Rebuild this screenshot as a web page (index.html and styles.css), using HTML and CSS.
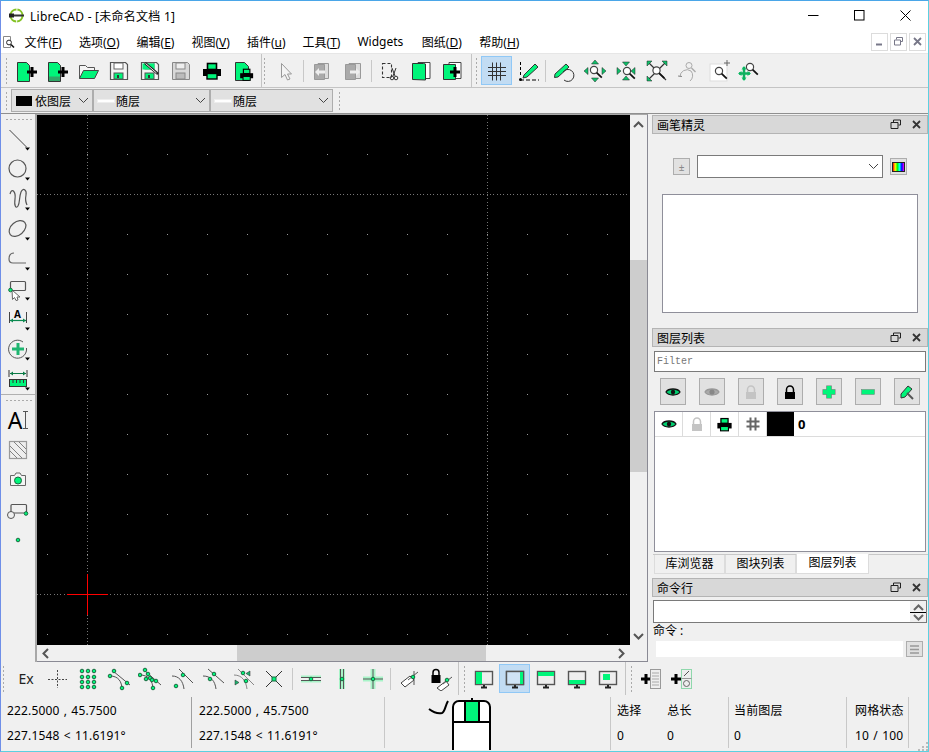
FILE: index.html
```html
<!DOCTYPE html>
<html lang="zh">
<head>
    <meta charset="UTF-8">
    <title>LibreCAD</title>
    <link rel="stylesheet" href="styles.css">
</head>
<body>
<svg class="defs" width="0" height="0">
    <defs>
        <g id="plus"><path d="M5 0v10M0 5h10" stroke="#000" stroke-width="3" fill="none"/></g>
        <g id="lens"><circle r="3.6" fill="#fff" stroke="#444" stroke-width="1.2"/><path d="M2.6 2.6l5.2 5" stroke="#111" stroke-width="1.8"/></g>
        <g id="tri"><path d="M19 20.5h5l-2.5 3z" fill="#000"/></g>
        <g id="dot"><circle r="1.8" fill="#00f57a" stroke="#1a6a40" stroke-width="1"/></g>
        <g id="floppy"><path d="M3.500 3.500h15l2 2v15h-17z" fill="#f4f4f4" stroke="#555" stroke-width="1.200"/><rect x="7" y="4" width="9" height="6" fill="#fff" stroke="#666"/><rect x="7" y="14" width="9" height="6" fill="#00f57a" stroke="#555"/><rect x="10" y="16" width="2" height="3" fill="#333"/></g>
        <g id="monitor"><rect x="3.500" y="4.500" width="17" height="13" fill="#eee" stroke="#555" stroke-width="1.400"/><path d="M9 20.500h6" stroke="#222" stroke-width="2"/><path d="M12 18v2" stroke="#222" stroke-width="2"/></g>
        <g id="eye"><path d="M5 12c2.500-4 11.500-4 14 0-2.500 4-11.500 4-14 0z" fill="#00d070" stroke="#111" stroke-width="1.300"/><circle cx="12" cy="12" r="2.200" fill="#111"/></g>
        <g id="eye-off"><path d="M5 12c2.500-4 11.500-4 14 0-2.500 4-11.500 4-14 0z" fill="#aaa" stroke="#999" stroke-width="1.300"/><circle cx="12" cy="12" r="2.600" fill="#888"/></g>
        <g id="lock"><path d="M8.500 12V9.500a3.500 3.500 0 0 1 7 0V12" fill="none" stroke="currentColor" stroke-width="1.500"/><rect x="7" y="12" width="10" height="7" fill="currentColor"/></g>
        <g id="print"><rect x="7.500" y="4.500" width="9" height="6" fill="#00f57a" stroke="#000" stroke-width="1.600"/><rect x="3" y="10" width="18" height="7" fill="#000"/><rect x="7" y="14.500" width="10" height="5.500" fill="#00f57a" stroke="#000" stroke-width="1.400"/></g>
    </defs>
</svg>

<div class="window">
    <div class="titlebar">
        <svg class="app-icon" width="17" height="17" viewBox="0 0 17 17"><circle cx="8.500" cy="8.500" r="6" fill="none" stroke="#84c225" stroke-width="2" stroke-dasharray="8.500 1"/><rect x="1" y="7.500" width="15" height="2" fill="#333"/><rect x="1" y="6.500" width="5" height="4" fill="#222"/></svg>
        <span class="title-text">LibreCAD - [未命名文档 1]</span>
        <div class="win-btns">
            <span class="win-btn"><svg width="11" height="11" viewBox="0 0 11 11"><path d="M0 5.500h10.500" stroke="#000"/></svg></span>
            <span class="win-btn"><svg width="11" height="11" viewBox="0 0 11 11"><rect x="0.500" y="0.500" width="9.500" height="9.500" fill="none" stroke="#000"/></svg></span>
            <span class="win-btn"><svg width="11" height="11" viewBox="0 0 11 11"><path d="M0.500 0.500l10 10M10.500 0.500l-10 10" stroke="#000"/></svg></span>
        </div>
    </div>

    <div class="menubar">
        <svg class="doc-icon" width="14" height="14" viewBox="0 0 14 14"><path d="M1.500 1.500h7v11h-7z" fill="#fff" stroke="#888"/><circle cx="7" cy="7.500" r="2.400" fill="#fff" stroke="#222"/><path d="M9 9.500l3 3" stroke="#111" stroke-width="1.600"/></svg>
        <span class="menu-item">文件(<u>F</u>)</span>
        <span class="menu-item">选项(<u>O</u>)</span>
        <span class="menu-item">编辑(<u>E</u>)</span>
        <span class="menu-item">视图(<u>V</u>)</span>
        <span class="menu-item">插件(<u>u</u>)</span>
        <span class="menu-item">工具(<u>T</u>)</span>
        <span class="menu-item menu-widgets">Widgets</span>
        <span class="menu-item menu-sheet">图纸(<u>D</u>)</span>
        <span class="menu-item">帮助(<u>H</u>)</span>
        <div class="mdi-btns">
            <span class="mdi-btn"><svg width="9" height="9" viewBox="0 0 9 9"><path d="M1 7.500h6" stroke="#778" stroke-width="2"/></svg></span>
            <span class="mdi-btn"><svg width="9" height="9" viewBox="0 0 9 9"><path d="M2.500 2.500v-2h6v4h-2M.5 3h6v5h-6z" fill="none" stroke="#778"/></svg></span>
            <span class="mdi-btn"><svg width="9" height="9" viewBox="0 0 9 9"><path d="M1 1l7 7M8 1l-7 7" stroke="#778" stroke-width="1.800"/></svg></span>
        </div>
    </div>

    <div class="toolbar row-file">
        <div class="tb-group group-file">
            <span class="grip"></span>
            <span class="tb"><svg class="ic" viewBox="0 0 24 24"><path d="M3.500 3.500h9l3 3v16h-12z" fill="#00f57a" stroke="#333"/><use href="#plus" x="13" y="8"/></svg></span>
            <span class="tb"><svg class="ic" viewBox="0 0 24 24"><path d="M3.500 3.500h9l3 3v16h-12z" fill="#00f57a" stroke="#333"/><path d="M4 17.500h11v4.500H4z" fill="#2fa868"/><use href="#plus" x="13" y="8"/></svg></span>
            <span class="tb"><svg class="ic" viewBox="0 0 24 24"><path d="M3.500 19.500v-13h6l2 2h7v3" fill="#f4f4f4" stroke="#555"/><path d="M3.500 19.500l4-8h15l-4 8z" fill="#00f57a" stroke="#444"/></svg></span>
            <span class="tb"><svg class="ic" viewBox="0 0 24 24"><use href="#floppy"/></svg></span>
            <span class="tb"><svg class="ic" viewBox="0 0 24 24"><use href="#floppy"/><path d="M4.500 4.500h12v6h-12z" fill="#00f57a"/><path d="M7 4l13 11" stroke="#222" stroke-width="2.400"/><path d="M7.500 4.500l11 9.500" stroke="#eee"/></svg></span>
            <span class="tb"><svg class="ic" viewBox="0 0 24 24"><path d="M3.500 3.500h15l2 2v15h-17z" fill="#d8d8d8" stroke="#888"/><rect x="7" y="4" width="9" height="6" fill="#eee" stroke="#888"/><rect x="7" y="14" width="9" height="6" fill="#bbb" stroke="#888"/></svg></span>
            <span class="tb"><svg class="ic" viewBox="0 0 24 24"><use href="#print"/></svg></span>
            <span class="tb"><svg class="ic" viewBox="0 0 24 24"><path d="M4.500 3.500h9l4 4v14h-13z" fill="#00f57a" stroke="#333"/><g transform="translate(7 7) scale(.72)"><use href="#print"/></g></svg></span>
        </div>
        <div class="tb-group group-edit">
            <span class="grip"></span>
            <span class="tb"><svg class="ic" viewBox="0 0 24 24"><path d="M7.500 4.500l10 10.500h-4l2.500 5-2.500 1-2.500-5.500-3.500 3z" fill="#f4f4f4" stroke="#999"/></svg></span>
            <span class="tb-sep"></span>
            <span class="tb"><svg class="ic" viewBox="0 0 24 24"><path d="M8 4.500h10.500v15H8z" fill="#ddd" stroke="#999"/><path d="M4.500 5.500h10v15h-10z" fill="#aaa" stroke="#999"/><path d="M5 13l4-4v2.500h6v3H9V17z" fill="#eee"/></svg></span>
            <span class="tb"><svg class="ic" viewBox="0 0 24 24"><path d="M8 4.500h11.500v15H8z" fill="#ddd" stroke="#999"/><path d="M4.500 5.500h10v15h-10z" fill="#aaa" stroke="#999"/><path d="M19 13l-4-4v2.500H9v3h6V17z" fill="#eee"/></svg></span>
            <span class="tb-sep"></span>
            <span class="tb"><svg class="ic" viewBox="0 0 24 24"><path d="M4.500 4.500h9v14h-9z" fill="none" stroke="#333" stroke-width="1.100" stroke-dasharray="3 2"/><path d="M14 9l3 8M18 9l-3 8" stroke="#333"/><circle cx="14" cy="19" r="1.800" fill="none" stroke="#333"/><circle cx="18" cy="19" r="1.800" fill="none" stroke="#333"/></svg></span>
            <span class="tb"><svg class="ic" viewBox="0 0 24 24"><path d="M9 3.500h12v16H9z" fill="#fff" stroke="#444"/><path d="M3.500 4.500h11l2 .5v16l-13-.5z" fill="#00f57a" stroke="#333"/></svg></span>
            <span class="tb"><svg class="ic" viewBox="0 0 24 24"><path d="M9 3.500h12v16H9z" fill="#fff" stroke="#444"/><path d="M3.500 5.500h12v15h-12z" fill="#00f57a" stroke="#333"/><use href="#plus" x="10" y="8"/></svg></span>
        </div>
        <div class="tb-group group-view">
            <span class="grip"></span>
            <span class="tb active"><svg class="ic" viewBox="0 0 24 24"><path d="M3 8.500h18M3 12.500h18M3 16.500h18M7.500 3.500v18M11.500 3.500v18M15.500 3.500v18" stroke="#333" fill="none"/></svg></span>
            <span class="tb"><svg class="ic" viewBox="0 0 24 24"><path d="M4.500 3v15" stroke="#000" stroke-dasharray="3 2"/><path d="M4 21h19" stroke="#000" stroke-width="1.200" stroke-dasharray="4 2"/><circle cx="4.500" cy="20.500" r="1.500"/><path d="M8 16l11-11 3 3-11 10-4 1z" fill="#00f57a" stroke="#333"/></svg></span>
            <span class="tb-sep"></span>
            <span class="tb"><svg class="ic" viewBox="0 0 24 24"><path d="M3 15L14 5l3 3L6 18l-3.500.5z" fill="#00f57a" stroke="#333"/><path d="M11 13a6 6 0 1 1 1 8" fill="none" stroke="#333"/></svg></span>
            <span class="tb"><svg class="ic" viewBox="0 0 24 24"><g transform="translate(11 11)"><use href="#lens"/></g><path d="M12 1l3.500 4h-7zM12 23l3.500-4h-7zM1 12l4-3.500v7zM23 12l-4-3.500v7z" fill="#0fc06a" stroke="#222" stroke-width=".5"/></svg></span>
            <span class="tb"><svg class="ic" viewBox="0 0 24 24"><g transform="translate(13 12)"><use href="#lens"/></g><path d="M12 7l3.500-4h-7zM12 17l3.500 4h-7zM7 12l-4-3.500v7zM17 12l4-3.500v7z" fill="#0fc06a" stroke="#222" stroke-width=".5"/></svg></span>
            <span class="tb"><svg class="ic" viewBox="0 0 24 24"><path d="M3 3l18 18M21 3L3 21" stroke="#333" stroke-width="1.200"/><path d="M2 2h5l-5 5zM22 2h-5l5 5zM2 22h5l-5-5z" fill="#0fc06a" stroke="#222" stroke-width=".5"/><g transform="translate(11.500 11.500)"><use href="#lens"/></g></svg></span>
            <span class="tb"><svg class="ic" viewBox="0 0 24 24"><circle cx="13" cy="6.500" r="3" fill="none" stroke="#aaa"/><path d="M15.500 9l4 4" stroke="#aaa" stroke-width="1.500"/><path d="M4 18a7 7 0 0 1 11-6 7 7 0 0 1-1 10" fill="none" stroke="#aaa"/><path d="M2 17l4 .5" stroke="#888"/></svg></span>
            <span class="tb"><svg class="ic" viewBox="0 0 24 24"><rect x="3" y="5" width="17" height="17" fill="#fff" stroke="#ddd"/><g transform="translate(12 12)"><use href="#lens"/></g><path d="M20 1v6M17 4h6" stroke="#666"/></svg></span>
            <span class="tb"><svg class="ic" viewBox="0 0 24 24"><g transform="translate(12 8)"><use href="#lens"/></g><path d="M6 7l2.500 3.500h-5zM6 22l2.500-3.500h-5zM0 14.500l3.500-2.500v5zM13 14.500L9.500 12v5z" fill="#0fd070"/><path d="M6 8v13M1 14.500h11" stroke="#0fb060" stroke-width="2.500"/></svg></span>
        </div>
    </div>

    <div class="toolbar row-pen">
        <span class="grip"></span>
        <span class="combo combo-color"><span class="swatch"></span>依图层<svg class="chev" width="11" height="7" viewBox="0 0 11 7"><path d="M1 1l4.500 4.500L10 1" fill="none" stroke="#444"/></svg></span>
        <span class="combo combo-line"><span class="dash"></span>随层<svg class="chev" width="11" height="7" viewBox="0 0 11 7"><path d="M1 1l4.500 4.500L10 1" fill="none" stroke="#444"/></svg></span>
        <span class="combo combo-line"><span class="dash"></span>随层<svg class="chev" width="11" height="7" viewBox="0 0 11 7"><path d="M1 1l4.500 4.500L10 1" fill="none" stroke="#444"/></svg></span>
        <span class="grip pen-grip"></span>
    </div>

    <div class="main">
        <div class="side-tools">
            <span class="grip-h"></span>
            <span class="st"><svg class="ic" viewBox="0 0 24 24"><path d="M3.500 3l17 17" stroke="#444"/><use href="#tri"/></svg></span>
            <span class="st"><svg class="ic" viewBox="0 0 24 24"><circle cx="11.500" cy="11.500" r="8.500" fill="none" stroke="#555" stroke-width="1.200"/><use href="#tri"/></svg></span>
            <span class="st"><svg class="ic" viewBox="0 0 24 24"><path d="M4 7c2-7 6-2 5 5s1 10 3 7 1-9 3-14 6-2 5 3 0 8 1 10" fill="none" stroke="#555" stroke-width="1.200"/><use href="#tri"/></svg></span>
            <span class="st"><svg class="ic" viewBox="0 0 24 24"><ellipse cx="11.500" cy="11.500" rx="9.500" ry="6.500" transform="rotate(-40 11.500 11.500)" fill="none" stroke="#555" stroke-width="1.200"/><use href="#tri"/></svg></span>
            <span class="st"><svg class="ic" viewBox="0 0 24 24"><path d="M8 6C4 6 3 9 3 12c0 2 1 4 4 4h13" fill="none" stroke="#666" stroke-width="1.200"/><use href="#tri"/></svg></span>
            <span class="st"><svg class="ic" viewBox="0 0 24 24"><rect x="4.500" y="4.500" width="15" height="9" rx="1" fill="none" stroke="#555" stroke-width="1.200"/><path d="M6 13l8 7-3 0 1 3-2 .5-1.500-3-2 2z" fill="#fff" stroke="#666"/><use href="#dot" x="4.500" y="13"/><use href="#tri"/></svg></span>
            <span class="st st-dim"><svg class="ic" viewBox="0 0 24 24"><path d="M3.500 5v11M20.500 5v11" stroke="#444"/><path d="M4 13.500h16" stroke="#0a8a50" stroke-width="1.200"/><path d="M4 13.500l3-2v4zM20 13.500l-3-2v4z" fill="#0a8a50"/><path d="M19 20.500h5l-2.500 3z" fill="#000"/></svg><b class="dim-a">A</b></span>
            <span class="st"><svg class="ic" viewBox="0 0 24 24"><path d="M17 5a9 9 0 1 0 3.500 6" fill="none" stroke="#555"/><path d="M12 6v12M6 12h12" stroke="#1fb570" stroke-width="3"/><use href="#tri"/></svg></span>
            <span class="st"><svg class="ic" viewBox="0 0 24 24"><path d="M3 3v7M21 3v7" stroke="#333"/><path d="M4 6.500h16" stroke="#0a7a45"/><path d="M4 6.500l3-2v4zM20 6.500l-3-2v4z" fill="#0a7a45"/><rect x="3.500" y="12.500" width="17" height="7" fill="#00f57a" stroke="#333"/><path d="M7 13v3M10.500 13v3M14 13v3M17.500 13v3" stroke="#333"/><use href="#tri"/></svg></span>
            <span class="side-sep"></span>
            <span class="grip-h"></span>
            <span class="st st-text"><span class="big-a">A</span><svg width="5" height="18" viewBox="0 0 5 18"><path d="M2.500 0v18M0 .5h5M0 17.500h5" stroke="#555"/></svg></span>
            <span class="st"><svg class="ic" viewBox="0 0 24 24"><rect x="3.500" y="3.500" width="17" height="17" fill="#eee" stroke="#999" stroke-width="1.200"/><path d="M4 8l12 12M4 13l7 7M8 4l12 12M13 4l7 7" stroke="#666" stroke-width=".8"/></svg></span>
            <span class="st"><svg class="ic" viewBox="0 0 24 24"><path d="M4.500 7.500h4l1.500-2.500h4l1.500 2.500h4v10h-15z" fill="#f4f4f4" stroke="#666"/><circle cx="12" cy="12.500" r="3.500" fill="#00f57a" stroke="#1a6a40"/></svg></span>
            <span class="st"><svg class="ic" viewBox="0 0 24 24"><path d="M5 14V7.500a1 1 0 0 1 1-1h13.500a1 1 0 0 1 1 1V15M8 15h10" fill="none" stroke="#555" stroke-width="1.200"/><circle cx="5" cy="17" r="3.500" fill="none" stroke="#555"/><use href="#dot" x="20" y="15.500"/></svg></span>
            <span class="st"><svg class="ic" viewBox="0 0 24 24"><use href="#dot" x="12" y="12"/></svg></span>
        </div>

        <div class="view">
            <div class="canvas">
                <svg class="grid-svg" width="593" height="530">
                    <defs>
                        <pattern id="dots" width="40" height="40" patternUnits="userSpaceOnUse"><rect x="10" y="39" width="1" height="1" fill="#9a9a9a"/></pattern>
                    </defs>
                    <rect width="593" height="530" fill="url(#dots)"/>
                    <g stroke="#777" stroke-dasharray="1 2.330" shape-rendering="crispEdges">
                        <path d="M50.500 0v530M450.500 0v530M0 79.500h593M0 479.500h593"/>
                    </g>
                </svg>
                <span class="cross-h"></span>
                <span class="cross-v"></span>
            </div>
            <div class="vscroll">
                <svg width="11" height="7" viewBox="0 0 11 7"><path d="M1 6l4.500-4.500L10 6" fill="none" stroke="#555" stroke-width="2"/></svg>
                <span class="v-track"><span class="v-thumb"></span></span>
                <svg width="11" height="7" viewBox="0 0 11 7"><path d="M1 1l4.500 4.500L10 1" fill="none" stroke="#555" stroke-width="2"/></svg>
            </div>
            <div class="hscroll">
                <svg width="7" height="11" viewBox="0 0 7 11"><path d="M6 1L1.500 5.500 6 10" fill="none" stroke="#555" stroke-width="2"/></svg>
                <span class="h-track"><span class="h-thumb"></span></span>
                <svg width="7" height="11" viewBox="0 0 7 11"><path d="M1 1l4.500 4.500L1 10" fill="none" stroke="#555" stroke-width="2"/></svg>
            </div>
            <div class="corner"></div>
        </div>

        <div class="dock">
            <div class="dock-title title-pen"><span>画笔精灵</span><svg class="dock-ctl" width="32" height="11" viewBox="0 0 32 11"><path d="M3.500 3V1h7v5h-2M1 3.500h7v6H1z" fill="none" stroke="#222"/><path d="M23 2l7 7M30 2l-7 7" stroke="#333" stroke-width="1.800"/></svg></div>
            <div class="pen-row">
                <span class="small-btn"><span class="pm">±</span></span>
                <span class="pen-combo"><svg class="chev" width="11" height="7" viewBox="0 0 11 7"><path d="M1 1l4.500 4.500L10 1" fill="none" stroke="#444"/></svg></span>
                <span class="small-btn"><span class="rainbow"></span></span>
            </div>
            <div class="pen-box"></div>

            <div class="dock-title title-layer"><span>图层列表</span><svg class="dock-ctl" width="32" height="11" viewBox="0 0 32 11"><path d="M3.500 3V1h7v5h-2M1 3.500h7v6H1z" fill="none" stroke="#222"/><path d="M23 2l7 7M30 2l-7 7" stroke="#333" stroke-width="1.800"/></svg></div>
            <div class="filter">Filter</div>
            <div class="layer-btns">
                <span class="lb"><svg class="ic" viewBox="0 0 24 24"><use href="#eye"/></svg></span>
                <span class="lb"><svg class="ic" viewBox="0 0 24 24"><use href="#eye-off"/></svg></span>
                <span class="lb muted"><svg class="ic" viewBox="0 0 24 24"><use href="#lock"/></svg></span>
                <span class="lb"><svg class="ic" viewBox="0 0 24 24"><use href="#lock"/></svg></span>
                <span class="lb"><svg class="ic" viewBox="0 0 24 24"><path d="M12 5.500v13M5.500 12h13" stroke="#777" stroke-width="5.500"/><path d="M12 6v12M6 12h12" stroke="#00f57a" stroke-width="4.500"/></svg></span>
                <span class="lb"><svg class="ic" viewBox="0 0 24 24"><rect x="5.500" y="9.500" width="13" height="5" fill="#00f57a" stroke="#777" stroke-width=".5"/></svg></span>
                <span class="lb"><svg class="ic" viewBox="0 0 24 24"><path d="M6 14l7-8 4 3-7 8-4 1z" fill="#00f57a" stroke="#333"/><path d="M12 13l6 6" stroke="#555" stroke-width="2"/></svg></span>
            </div>
            <div class="layer-list">
                <div class="layer-row">
                    <span class="lc"><svg class="ic" viewBox="0 0 24 24"><use href="#eye"/></svg></span>
                    <span class="lc muted"><svg class="ic" viewBox="0 0 24 24"><use href="#lock"/></svg></span>
                    <span class="lc"><svg class="ic print-small" viewBox="0 0 24 24"><use href="#print"/></svg></span>
                    <span class="lc"><svg class="ic" viewBox="0 0 24 24"><path d="M5.500 9.500h13M5.500 14.500h13M9.500 5.500v13M14.500 5.500v13" stroke="#666" stroke-width="2" fill="none"/></svg></span>
                    <span class="layer-swatch"></span>
                    <b class="layer-name">0</b>
                </div>
            </div>
            <div class="tabs">
                <span class="tab tab-a">库浏览器</span>
                <span class="tab tab-b">图块列表</span>
                <span class="tab tab-on">图层列表</span>
            </div>

            <div class="dock-title title-cmd"><span>命令行</span><svg class="dock-ctl" width="32" height="11" viewBox="0 0 32 11"><path d="M3.500 3V1h7v5h-2M1 3.500h7v6H1z" fill="none" stroke="#222"/><path d="M23 2l7 7M30 2l-7 7" stroke="#333" stroke-width="1.800"/></svg></div>
            <div class="cmd-out">
                <span class="cmd-spin"><svg width="11" height="7" viewBox="0 0 11 7"><path d="M1 6l4.500-4.500L10 6" fill="none" stroke="#666" stroke-width="2"/></svg><i class="spin-line"></i><svg width="11" height="7" viewBox="0 0 11 7"><path d="M1 1l4.500 4.500L10 1" fill="none" stroke="#666" stroke-width="2"/></svg></span>
            </div>
            <div class="cmd-label">命令 :</div>
            <div class="cmd-in">
                <span class="cmd-field"></span>
                <span class="small-btn menu-btn"><svg width="9" height="9" viewBox="0 0 9 9"><path d="M0 1h9M0 4.500h9M0 8h9" stroke="#999" stroke-width="1.500"/></svg></span>
            </div>
        </div>
    </div>

    <div class="toolbar row-snap">
        <div class="tb-group group-snap">
            <span class="grip"></span>
            <span class="tb tb-ex">Ex</span>
            <span class="tb"><svg class="ic" viewBox="0 0 24 24"><path d="M12.500 3v18M3 12.500h19" stroke="#444" stroke-dasharray="2 1.500"/></svg></span>
            <span class="tb"><svg class="ic" viewBox="0 0 24 24"><use href="#dot" x="6" y="4"/><use href="#dot" x="12" y="4"/><use href="#dot" x="18" y="4"/><use href="#dot" x="6" y="10"/><use href="#dot" x="12" y="10"/><use href="#dot" x="18" y="10"/><use href="#dot" x="6" y="15"/><use href="#dot" x="12" y="15"/><use href="#dot" x="18" y="15"/><use href="#dot" x="6" y="20"/><use href="#dot" x="12" y="20"/><use href="#dot" x="18" y="20"/></svg></span>
            <span class="tb"><svg class="ic" viewBox="0 0 24 24"><path d="M6 4l17 14M3 9c8 0 12 5 12 14" fill="none" stroke="#555"/><use href="#dot" x="7" y="4"/><use href="#dot" x="3" y="9"/><use href="#dot" x="20" y="16"/><use href="#dot" x="15" y="21"/></svg></span>
            <span class="tb"><svg class="ic" viewBox="0 0 24 24"><path d="M6 3l17 15M2 8c8 0 13 5 13 15" fill="none" stroke="#555"/><use href="#dot" x="7" y="3"/><use href="#dot" x="2" y="8"/><use href="#dot" x="10" y="7"/><use href="#dot" x="8" y="12"/><use href="#dot" x="12" y="11"/><use href="#dot" x="14" y="13"/><use href="#dot" x="18" y="14"/><use href="#dot" x="15" y="21"/></svg></span>
            <span class="tb"><svg class="ic" viewBox="0 0 24 24"><path d="M10 2l14 14M3 9c7 0 11 5 12 13" fill="none" stroke="#555"/><use href="#dot" x="14" y="8"/><use href="#dot" x="7" y="19"/></svg></span>
            <span class="tb"><svg class="ic" viewBox="0 0 24 24"><path d="M8 2l16 14M3 9c8 0 12 5 13 13" fill="none" stroke="#555"/><use href="#dot" x="14" y="7"/><use href="#dot" x="10" y="12"/></svg></span>
            <span class="tb"><svg class="ic" viewBox="0 0 24 24"><path d="M7 2l16 16M3 8c8 0 12 6 13 14" fill="none" stroke="#888"/><use href="#dot" x="12" y="6"/><use href="#dot" x="15" y="14"/><path d="M19 4l-4 2.500 4 2.500zM4 13l4 2.500-4 2.500z" fill="#1fb570" stroke="#222" stroke-width=".5"/></svg></span>
            <span class="tb"><svg class="ic" viewBox="0 0 24 24"><path d="M4 4l16 16M20 4L4 20" stroke="#333"/><rect x="10" y="10" width="4" height="4" fill="#00f57a" stroke="#1a6a40"/></svg></span>
            <span class="tb-sep"></span>
            <span class="tb"><svg class="ic" viewBox="0 0 24 24"><path d="M2 9.500h20M2 14.500h20" stroke="#a8f4c8" stroke-width="2"/><path d="M2 10.500h20M2 13.500h20" stroke="#555"/><use href="#dot" x="12" y="12"/></svg></span>
            <span class="tb"><svg class="ic" viewBox="0 0 24 24"><path d="M12 2v20" stroke="#a8f4c8" stroke-width="6"/><path d="M10.500 2v20M13.500 2v20" stroke="#555"/><use href="#dot" x="12" y="12"/></svg></span>
            <span class="tb"><svg class="ic" viewBox="0 0 24 24"><path d="M12 2v20M2 12h20" stroke="#a8f4c8" stroke-width="5"/><path d="M12 2v20M2 12h20" stroke="#555"/><use href="#dot" x="12" y="12"/></svg></span>
            <span class="tb-sep"></span>
            <span class="tb"><svg class="ic" viewBox="0 0 24 24"><path d="M4 16l9-7 4 4-9 7z" fill="#fff" stroke="#444"/><path d="M11 13L21 5M17 4v14" stroke="#555"/><use href="#dot" x="16" y="10"/></svg></span>
            <span class="tb tb-lock"><svg class="ic" viewBox="0 0 24 24"><path d="M4 9V5.500a3 3 0 0 1 6 0V9" fill="none" stroke="#000" stroke-width="1.500"/><rect x="2.500" y="8" width="9" height="8" fill="#000"/><path d="M8 21l9-7 3 4-8 6z" fill="#fff" stroke="#444"/><path d="M14 17l9-7" stroke="#555"/><use href="#dot" x="18" y="13"/></svg></span>
        </div>
        <div class="tb-group group-dock">
            <span class="grip"></span>
            <span class="tb"><svg class="ic" viewBox="0 0 24 24"><use href="#monitor"/><rect x="4" y="5" width="6" height="12" fill="#00f57a"/></svg></span>
            <span class="tb active"><svg class="ic" viewBox="0 0 24 24"><use href="#monitor"/><rect x="4" y="5" width="16" height="12" fill="#cfe3f5"/><rect x="3.500" y="4.500" width="17" height="13" fill="none" stroke="#555" stroke-width="1.400"/><rect x="17" y="5" width="3" height="12" fill="#00f57a"/></svg></span>
            <span class="tb"><svg class="ic" viewBox="0 0 24 24"><use href="#monitor"/><rect x="4" y="5" width="16" height="4" fill="#00f57a"/></svg></span>
            <span class="tb"><svg class="ic" viewBox="0 0 24 24"><use href="#monitor"/><rect x="4" y="13" width="16" height="4" fill="#00f57a"/></svg></span>
            <span class="tb"><svg class="ic" viewBox="0 0 24 24"><use href="#monitor"/><rect x="7" y="7" width="7" height="6" fill="#00f57a"/></svg></span>
        </div>
        <div class="tb-group">
            <span class="grip"></span>
            <span class="tb"><svg class="ic" viewBox="0 0 24 24"><use href="#plus" x="2" y="7"/><rect x="11.500" y="2.500" width="10" height="19" fill="#eee" stroke="#999"/><path d="M13 6h7M13 9h7M13 12h7M13 15h7M13 18h7" stroke="#aaa"/></svg></span>
            <span class="tb"><svg class="ic" viewBox="0 0 24 24"><use href="#plus" x="1" y="7"/><rect x="11.500" y="2.500" width="10" height="19" fill="#eee" stroke="#8fd8ac"/><path d="M11.500 11.500h10" stroke="#999"/><path d="M14 9l5-5" stroke="#555"/><circle cx="16.500" cy="16.500" r="3" fill="none" stroke="#666"/></svg></span>
        </div>
    </div>

    <div class="statusbar">
        <div class="st-cell st-abs"><span>222.5000 , 45.7500</span><span>227.1548 &lt; 11.6191°</span></div>
        <div class="st-cell st-rel"><span>222.5000 , 45.7500</span><span>227.1548 &lt; 11.6191°</span></div>
        <div class="st-mouse">
            <svg width="70" height="56" viewBox="0 0 70 56"><path d="M4 12c4 3 9 5 13 4 3-1 3-7 6-12" fill="none" stroke="#000" stroke-width="2"/><path d="M28 56V10a6 6 0 0 1 6-6h25a6 6 0 0 1 6 6v46" fill="#fff" stroke="#000" stroke-width="2"/><rect x="40" y="5" width="14" height="20" fill="#00f57a"/><path d="M40 5v20M54 5v20M28 25h37M47 1v4" stroke="#000" stroke-width="2" fill="none"/></svg>
        </div>
        <div class="st-cell st-sel"><span class="sel-pair"><span>选择</span><span>总长</span></span><span class="sel-pair"><span>0</span><span>0</span></span></div>
        <div class="st-cell st-layer"><span>当前图层</span><span>0</span></div>
        <div class="st-cell st-grid"><span>网格状态</span><span>10 / 100</span></div>
        <div class="st-end">
            <svg class="size-grip" width="10" height="10" viewBox="0 0 10 10"><path d="M8 1h2v2H8zM4 5h2v2H4zM8 5h2v2H8zM0 8h2v2H0zM4 8h2v2H4zM8 8h2v2H8z" fill="#bbb"/></svg>
        </div>
    </div>
</div>
</body>
</html>
```

FILE: styles.css
```css
* {
    box-sizing: border-box;
}
html, body {
    margin: 0;
    height: 100%;
    overflow: hidden;
}
body {
    font-family: "Noto Sans", "Noto Sans CJK SC", sans-serif;
    font-size: 12px;
    color: #000;
    background-color: #f0f0f0;
}
.defs {
    position: absolute;
}
.window {
    width: 929px;
    height: 752px;
    display: flex;
    flex-direction: column;
    border-top: 1px solid #4aa6e8;
    border-left: 1px solid #6f8fe8;
    border-right: 1px solid #5cd0e0;
    border-bottom: 1px solid #5cd0e0;
    background-color: #f0f0f0;
}

/* title + menu */
.titlebar {
    height: 29px;
    flex-shrink: 0;
    display: flex;
    align-items: center;
    background-color: #fff;
    padding-left: 7px;
}
.title-text {
    margin-left: 5px;
    font-size: 12px;
    letter-spacing: .25px;
}
.win-btns {
    margin-left: auto;
    display: flex;
}
.win-btn {
    width: 46px;
    height: 29px;
    display: flex;
    align-items: center;
    justify-content: center;
}
.menubar {
    height: 24px;
    flex-shrink: 0;
    display: flex;
    align-items: center;
    background-color: #fff;
    border-bottom: 1px solid #e6e6e6;
    padding-left: 1px;
}
.menu-item {
    padding: 0 8.5px;
    white-space: nowrap;
}
.menu-widgets {
    padding-right: 10px;
}
.menu-sheet {
    padding-right: 9px;
}
.mdi-btns {
    margin-left: auto;
    display: flex;
    gap: 2px;
    padding-right: 2px;
}
.mdi-btn {
    width: 17px;
    height: 18px;
    border: 1px solid #dcdcdc;
    display: flex;
    align-items: center;
    justify-content: center;
}

/* toolbars */
.toolbar {
    display: flex;
    align-items: center;
    flex-shrink: 0;
    background-color: #f0f0f0;
}
.row-file {
    height: 34px;
    border-bottom: 1px solid #c4c4c4;
}
.tb-group {
    height: 100%;
    display: flex;
    align-items: center;
    border-right: 1px solid #c4c4c4;
}
.group-file {
    width: 261px;
}
.group-edit {
    width: 210px;
}
.group-view {
    border-right: none;
}
.grip {
    width: 3px;
    height: 27px;
    margin: 0 4px 0 4px;
    flex-shrink: 0;
    background-image: radial-gradient(circle, #aaa 1px, transparent 1px);
    background-size: 3px 4px;
}
.tb {
    width: 31px;
    height: 29px;
    flex-shrink: 0;
    display: flex;
    align-items: center;
    justify-content: center;
}
.tb.active {
    background-color: #c2dcf3;
    border: 1px solid #90c8f6;
}
.tb-sep {
    width: 1px;
    height: 22px;
    margin: 0 2.5px 0 2px;
    flex-shrink: 0;
    background-color: #c8c8c8;
}
.ic {
    width: 24px;
    height: 24px;
    display: block;
}
.group-file .grip {
    margin: 0 2px 0 4px;
}
.group-edit .grip {
    margin: 0 4px 0 1px;
}
.group-view .grip {
    margin: 0 3px 0 3px;
}
.row-pen {
    height: 26px;
    border-bottom: 1px solid #8f8f8f;
}
.row-pen > .grip {
    height: 20px;
    margin: 0 3px 0 4px;
}
.row-pen > .pen-grip {
    margin-left: 5px;
}
.combo {
    height: 23px;
    display: flex;
    align-items: center;
    background-color: #e1e1e1;
    border: 1px solid #adadad;
    padding-left: 4px;
}
.combo-color {
    width: 82px;
}
.combo-line {
    width: 117px;
}
.combo-line + .combo-line {
    width: 123px;
}
.chev {
    margin-left: auto;
    margin-right: 3px;
}
.swatch {
    width: 16px;
    height: 10px;
    margin-right: 3px;
    background-color: #000;
}
.dash {
    width: 16px;
    height: 2px;
    margin-right: 2px;
    background-color: #fff;
    box-shadow: 0 0 0 1px #eee;
}

/* main area */
.main {
    height: 548px;
    flex-shrink: 0;
    display: flex;
}
.side-tools {
    width: 36px;
    flex-shrink: 0;
    border-right: 2px solid #a8a8a8;
    display: flex;
    flex-direction: column;
    align-items: center;
}
.grip-h {
    width: 27px;
    height: 10px;
    flex-shrink: 0;
    background-image: radial-gradient(circle, #aaa 1px, transparent 1px);
    background-size: 4px 3px;
    background-repeat: repeat-x;
    background-position: 0 4px;
}
.side-tools .st:first-of-type {
    margin-top: 1px;
}
.st {
    height: 30px;
    flex-shrink: 0;
    display: flex;
    align-items: center;
    justify-content: center;
}
.side-sep {
    width: 100%;
    height: 1px;
    flex-shrink: 0;
    background-color: #b0b0b0;
}
.st-dim {
    position: relative;
}
.dim-a {
    position: absolute;
    left: 8px;
    top: 5px;
    font-size: 10px;
    line-height: 11px;
}
.st-text {
    gap: 1px;
}
.big-a {
    font-size: 23px;
    line-height: 24px;
}
.view {
    width: 611px;
    flex-shrink: 0;
    display: grid;
    grid-template-columns: 593px 17px;
    grid-template-rows: 530px 16px;
    border-right: 1px solid #8a8a94;
    border-bottom: 1px solid #8a8a94;
    border-top: 1px solid #a8a8a8;
}
.canvas {
    position: relative;
    background-color: #000;
    overflow: hidden;
}
.grid-svg {
    display: block;
}
.cross-h {
    position: absolute;
    left: 30px;
    top: 479px;
    width: 41px;
    height: 1px;
    background-color: #f00;
}
.cross-v {
    position: absolute;
    left: 50px;
    top: 459px;
    width: 1px;
    height: 41px;
    background-color: #f00;
}
.vscroll {
    display: flex;
    flex-direction: column;
    align-items: center;
    justify-content: space-between;
    padding: 6px 0 5px;
}
.v-track {
    flex: 1;
    width: 100%;
}
.v-thumb {
    display: block;
    width: 100%;
    height: 212px;
    margin-top: 132px;
    background-color: #cdcdcd;
}
.hscroll {
    display: flex;
    align-items: center;
    justify-content: space-between;
    padding: 0 5px;
}
.h-track {
    flex: 1;
    height: 100%;
}
.h-thumb {
    display: block;
    height: 100%;
    width: 249px;
    margin-left: 188px;
    background-color: #cdcdcd;
}

/* right docks */
.dock {
    flex: 1;
    display: flex;
    flex-direction: column;
    padding-top: 1px;
}
.dock-title {
    height: 19px;
    margin-left: 4px;
    display: flex;
    align-items: center;
    justify-content: space-between;
    padding: 0 6px 0 4px;
    background-color: #d8d8d8;
    border: 1px solid #b4b4b4;
    flex-shrink: 0;
}
.dock-ctl {
    margin-right: -1px;
}
.pen-row {
    display: flex;
    align-items: center;
    margin: 21px 0 0 25px;
    height: 23px;
}
.small-btn {
    width: 17px;
    height: 17px;
    flex-shrink: 0;
    display: flex;
    align-items: center;
    justify-content: center;
    background-color: #e1e1e1;
    border: 1px solid #adadad;
}
.pm {
    font-size: 10px;
    color: #888;
    line-height: 1;
}
.rainbow {
    width: 13px;
    height: 10px;
    border: 1px solid #222;
    background-image: linear-gradient(90deg, #f00, #ff0, #0f0, #0ff, #00f, #f0f);
}
.pen-combo {
    width: 186px;
    height: 23px;
    margin: 0 7px;
    background-color: #fff;
    border: 1px solid #7a7a7a;
    display: flex;
    align-items: center;
}
.pen-box {
    width: 256px;
    height: 119px;
    margin: 16px 0 0 14px;
    background-color: #fff;
    border: 1px solid #8f8f9a;
    flex-shrink: 0;
}
.title-layer {
    margin-top: 15px;
}
.filter {
    height: 21px;
    margin: 4px 2px 0 6px;
    padding-left: 2px;
    font-family: "Liberation Mono", monospace;
    font-size: 10px;
    line-height: 19px;
    color: #777;
    background-color: #fff;
    border: 1px solid #7a7a7a;
    flex-shrink: 0;
}
.layer-btns {
    display: flex;
    gap: 13px;
    margin: 6px 0 0 12px;
}
.lb {
    width: 26px;
    height: 27px;
    display: flex;
    align-items: center;
    justify-content: center;
    background-color: #e1e1e1;
    border: 1px solid #adadad;
}
.muted {
    color: #c4c4c4;
}
.layer-list {
    height: 141px;
    margin: 6px 2px 0 6px;
    background-color: #fff;
    border: 1px solid #8f8f9a;
    flex-shrink: 0;
}
.layer-row {
    height: 25px;
    display: flex;
    align-items: center;
    border-bottom: 1px solid #dcdcdc;
}
.lc {
    width: 28px;
    height: 100%;
    display: flex;
    align-items: center;
    justify-content: center;
    border-right: 1px solid #dcdcdc;
}
.print-small {
    width: 19px;
    height: 19px;
}
.layer-swatch {
    width: 27px;
    height: 100%;
    background-color: #000;
}
.layer-name {
    margin-left: 4px;
    font-size: 13px;
}
.tabs {
    height: 20px;
    margin: 2px 0 0 5px;
    border-top: 1px solid #c8c8c8;
    display: flex;
    flex-shrink: 0;
    padding-left: 1px;
}
.tab {
    width: 71px;
    height: 19px;
    text-align: center;
    line-height: 18px;
    background-color: #f0f0f0;
    border: 1px solid #dcdcdc;
    border-top: none;
}
.tab-on {
    width: 73px;
    background-color: #fff;
    margin-top: -1px;
    height: 20px;
}
.title-cmd {
    margin-top: 4px;
}
.cmd-out {
    height: 23px;
    margin: 3px 1px 0 5px;
    background-color: #fff;
    border: 1px solid #7a7a7a;
    display: flex;
    justify-content: flex-end;
    flex-shrink: 0;
}
.cmd-spin {
    width: 16px;
    display: flex;
    flex-direction: column;
    align-items: center;
    justify-content: space-between;
    padding: 3px 0 1px;
    background-color: #f0f0f0;
}
.spin-line {
    width: 16px;
    height: 1px;
    background-color: #000;
}
.cmd-label {
    margin: 0 0 0 5px;
    height: 18px;
    line-height: 15px;
}
.cmd-in {
    display: flex;
    align-items: center;
    margin-left: 8px;
    gap: 3px;
}
.cmd-field {
    width: 247px;
    height: 16px;
    background-color: #fff;
}
.menu-btn {
    height: 16px;
}

/* snap toolbar */
.row-snap {
    height: 33px;
}
.tb-ex {
    font-size: 14px;
    color: #222;
}
.group-snap {
    width: 458px;
}
.group-snap .grip {
    margin: 0 5.5px 0 1px;
}
.group-snap .tb-lock {
    margin-left: 1px;
}
.group-dock {
    width: 167px;
}
.group-dock .grip {
    margin: 0 2px 0 4px;
}
.row-snap .tb-group:last-child {
    border-right: none;
}
.row-snap .tb-group:last-child .grip {
    margin: 0 2px 0 4px;
}

/* status bar */
.statusbar {
    flex: 1;
    min-height: 0;
    overflow: hidden;
    display: grid;
    grid-template-columns: 191px 193px 226px 118px 118px 62px 1fr;
    padding-top: 2px;
}
.st-cell {
    display: flex;
    flex-direction: column;
    justify-content: space-between;
    padding: 5px 0 4px 6px;
    border-right: 1px solid #c8c8c8;
    white-space: nowrap;
    line-height: 17px;
    height: 51px;
    letter-spacing: .15px;
    word-spacing: 1px;
}
.st-abs {
    border-right-color: #a0a0a0;
}
.st-rel {
    padding-left: 7px;
}
.st-sel {
    padding-left: 6px;
}
.st-layer {
    padding-left: 5px;
}
.st-grid {
    padding-left: 8px;
}
.st-mouse {
    height: 53px;
    padding-left: 40px;
    border-right: 1px solid #c8c8c8;
    overflow: hidden;
}
.st-mouse svg {
    display: block;
}
.sel-pair {
    display: flex;
    gap: 26px;
}
.sel-pair span {
    min-width: 24px;
}
.st-end {
    position: relative;
}
.size-grip {
    position: absolute;
    right: 0;
    bottom: 0;
}
```
